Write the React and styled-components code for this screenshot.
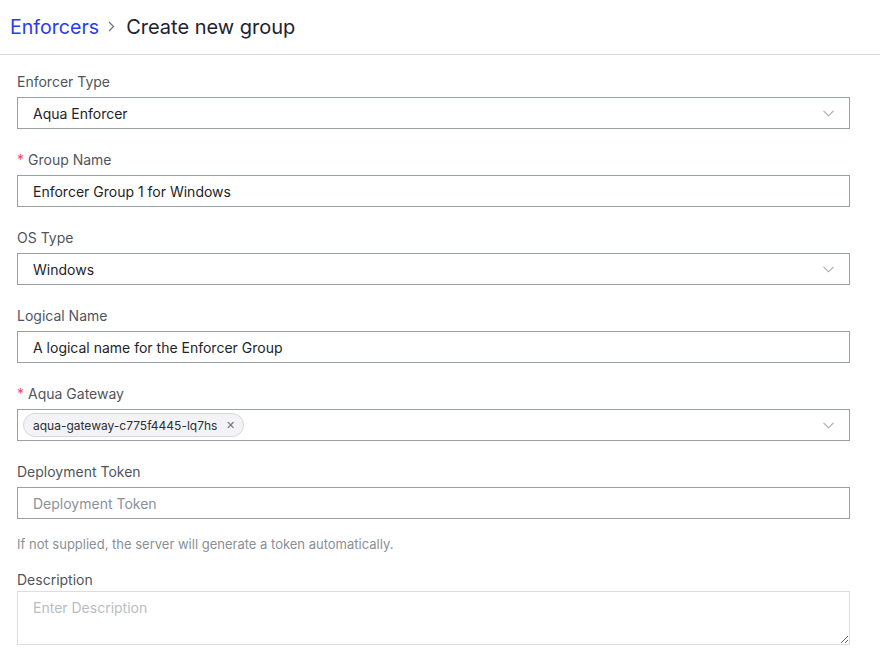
import React from 'react';
import styled, { createGlobalStyle } from 'styled-components';

const GlobalStyle = createGlobalStyle`
  body {
    margin: 0;
    background: #fff;
    font-family: Inter, "Noto Sans", sans-serif;
  }
`;

const Header = styled.div`
  height: 53px;
  display: flex;
  align-items: center;
  padding-left: 10px;
  padding-bottom: 1px;
  border-bottom: 1px solid #d9d9d9;
  font-size: 19.6px;
`;

const Crumb = styled.span`
  color: ${(p) => (p.link ? '#2a3bf4' : '#1b2330')};
  font-size: ${(p) => (p.link ? '19.6px' : '20px')};
  cursor: ${(p) => (p.link ? 'pointer' : 'default')};
`;

const Separator = styled.span`
  display: flex;
  align-items: center;
  margin: 0 11px 0 9px;
  color: #6b7280;
`;

const Form = styled.div`
  padding: 17px 30px 12px 17px;
`;

const Field = styled.div`
  display: flex;
  flex-direction: column;
  margin-bottom: ${(p) => (p.tight ? '0' : '21px')};
`;

const Label = styled.label`
  font-size: 14px;
  line-height: 20px;
  color: #50555d;
  margin-bottom: ${(p) => (p.small ? '1px' : '5px')};
`;

const Required = styled.span`
  color: #f5476b;
  margin-right: 4px;
`;

const Box = styled.div`
  height: 32px;
  box-sizing: border-box;
  border: 1px solid #9aa0a6;
  display: flex;
  align-items: center;
  padding: 0 15px;
  font-size: 14px;
  color: ${(p) => (p.placeholder ? '#8c9198' : '#1f2328')};
  justify-content: space-between;
`;

const ChipBox = styled(Box)`
  padding-left: 5px;
`;

const Chip = styled.span`
  display: inline-flex;
  align-items: center;
  height: 24px;
  box-sizing: border-box;
  padding: 0 8px 0 9px;
  border: 1px solid #d6d8dc;
  border-radius: 12px;
  background: #f3f3f5;
  font-size: 12px;
  color: #2b2f36;
`;

const ChipClose = styled.span`
  margin-left: 9px;
  font-size: 11px;
  color: #6b7280;
`;

const Help = styled.div`
  font-size: 13px;
  line-height: 18px;
  color: #8a8f97;
  margin: 16px 0 17px;
`;

const TextArea = styled.textarea`
  height: 54px;
  box-sizing: border-box;
  border: 1px solid #dcdce3;
  padding: 7px 15px;
  font-family: Inter, "Noto Sans", sans-serif;
  font-size: 14px;
  color: #1f2328;
  resize: vertical;
  outline: none;
  &::placeholder {
    color: #b9bcc4;
  }
`;

const Chevron = () => (
  <svg width="11" height="7" viewBox="0 0 11 7" fill="none">
    <path d="M0.5 0.8 L5.5 5.8 L10.5 0.8" stroke="#a3a7ae" strokeWidth="1.1" />
  </svg>
);

const BreadArrow = () => (
  <svg width="7" height="11" viewBox="0 0 7 11" fill="none">
    <path d="M1 1 L5.5 5.5 L1 10" stroke="#6b7280" strokeWidth="1.2" />
  </svg>
);

const SelectField = ({ label, value, required }) => (
  <Field>
    <Label>
      {required && <Required>*</Required>}
      {label}
    </Label>
    <Box>
      <span>{value}</span>
      <Chevron />
    </Box>
  </Field>
);

const InputField = ({ label, value, required }) => (
  <Field>
    <Label>
      {required && <Required>*</Required>}
      {label}
    </Label>
    <Box>{value}</Box>
  </Field>
);

const App = () => (
  <>
    <GlobalStyle />
    <Header>
      <Crumb link>Enforcers</Crumb>
      <Separator>
        <BreadArrow />
      </Separator>
      <Crumb>Create new group</Crumb>
    </Header>
    <Form>
      <SelectField label="Enforcer Type" value="Aqua Enforcer" />
      <InputField label="Group Name" value="Enforcer Group 1 for Windows" required />
      <SelectField label="OS Type" value="Windows" />
      <InputField label="Logical Name" value="A logical name for the Enforcer Group" />
      <Field>
        <Label>
          <Required>*</Required>
          Aqua Gateway
        </Label>
        <ChipBox>
          <Chip>
            aqua-gateway-c775f4445-lq7hs
            <ChipClose>✕</ChipClose>
          </Chip>
          <Chevron />
        </ChipBox>
      </Field>
      <Field tight>
        <Label>Deployment Token</Label>
        <Box placeholder>Deployment Token</Box>
      </Field>
      <Help>If not supplied, the server will generate a token automatically.</Help>
      <Field tight>
        <Label small>Description</Label>
        <TextArea placeholder="Enter Description" />
      </Field>
    </Form>
  </>
);

export default App;
